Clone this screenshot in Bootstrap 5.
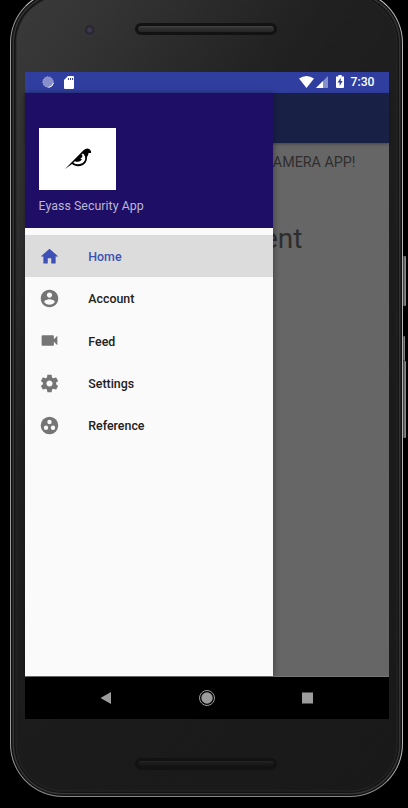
<!DOCTYPE html>
<html lang="en">
<head>
<meta charset="utf-8">
<meta name="viewport" content="width=device-width, initial-scale=1">
<title>Eyass Security App</title>
<link href="https://cdn.jsdelivr.net/npm/bootstrap@5.3.0/dist/css/bootstrap.min.css" rel="stylesheet">
<style>
html,body{height:808px;overflow:hidden}
body{background:#000;font-family:Roboto,"Liberation Sans",sans-serif}
svg{display:block;flex:none}
.phone{width:393px;height:807px;margin:-10px 0 0 10px;border:1.5px solid #aaa;border-color:#ccc #b5b5b5 #8c8c8c #999;border-radius:53px;background:linear-gradient(125deg,#3b3b3b 0,#333 12%,#202020 34%,#1b1b1b 60%,#191919 100%);box-shadow:inset 0 0 0 1.5px #111,inset 0 0 0 3px #353535,inset 0 0 0 4.5px #141414,inset 0 0 0 5.5px #272727}
.forehead{height:80.5px;padding:31.5px 0 0 71px}
.lens{width:14px;height:14px;background:radial-gradient(circle at 55% 50%,#40384c 0 2px,#292634 3px 4px,#323232 5.5px,#383838 7px)}
.speaker{width:142px;height:12px;margin-left:39px;border:3px solid #121212;border-radius:6px;background:linear-gradient(#434343,#303030 35%,#262626)}
.chin .speaker{margin:39px 0 0 123.5px;background:linear-gradient(#252525,#191919 45%,#121212)}
.screen{width:364px;height:647px;margin-left:13.5px;background:#000}
.statusbar{height:21px;background:#303f9f;color:#fff;font-size:12.2px;font-weight:500;padding:0 14px 0 17px}
.statusbar span{margin-left:7px}
.sdcard{margin-left:10px}
.cell{margin:0 8px 0 2px}
.view{height:584px;border-bottom:1px solid #777;background:#666}
.drawer{top:0;left:0;width:248px;height:583px;background:#fafafa;box-shadow:1px 0 6px rgba(0,0,0,.35);z-index:2}
.drawer-head{height:135px;background:#1f0e66;padding:35px 14px 0;margin-bottom:7px;color:#bbb6d1;font-size:12.4px}
.logo{width:77px;height:62px}
.app-title{margin-top:6px;line-height:20px;letter-spacing:.03px}
.menu-row{height:42.4px;padding:1px 14px 0;color:#212121;font-size:12.4px;font-weight:500;gap:28.8px}
.menu-row span{padding-top:2px}
.menu-row svg{fill:#757575}
.menu-row.active{background:#dcdcdc;color:#3f51b5}
.menu-row.active svg{fill:#3f51b5}
.content{color:#2e2e2e}
.appbar{height:50px;background:#192046;box-shadow:0 1px 3px rgba(0,0,0,.35)}
.welcome{margin-top:9px;font-size:14.3px;line-height:20px;padding-right:33px}
.fragment{margin-top:48px;font-size:28px;line-height:38px;padding-right:86px}
.navkeys{height:42px}
.keys{width:4px;margin-top:256px}
.side{width:3px;background:linear-gradient(90deg,#333,#777 60%,#999);border-radius:1px}
.power{height:50px}.vol-top{height:25px;margin-top:30px;width:2px}.vol{height:77px}
</style>
<script src="https://cdn.jsdelivr.net/npm/bootstrap@5.3.0/dist/js/bootstrap.bundle.min.js"></script>
</head>
<body>
<div class="d-flex align-items-start">
<main class="phone flex-shrink-0">
  <div class="forehead d-flex align-items-start">
    <div class="lens rounded-circle"></div><div class="speaker"></div>
  </div>
  <div class="screen">
    <div class="statusbar d-flex align-items-center justify-content-between">
      <div class="d-flex align-items-center">
        <svg width="12" height="12" viewBox="0 0 12 12"><circle cx="6" cy="6" r="5.2" fill="#8790cb" stroke="#a3a9d8" stroke-dasharray="1.5 1"/><path d="M11.400 7A5.500 5.500 0 0 1 6.500 11.400" fill="none" stroke="#fff" stroke-width="1"/></svg>
        <svg width="10" height="13" viewBox="0 0 10 13" class="sdcard"><path d="M0 4 4 0h5q1 0 1 1v11q0 1-1 1H1q-1 0-1-1Z" fill="#fff"/><path d="M4.400 2v2M6.500 2v2M8.600 2v2" stroke="#303f9f"/></svg>
      </div>
      <div class="d-flex align-items-center">
        <svg width="15" height="12" viewBox="0 0 15 12"><path d="M0 2.500Q7.500-2.500 15 2.500L7.500 12Z" fill="#fff"/></svg>
        <svg width="12" height="12" viewBox="0 0 12 12" class="cell"><path d="M0 12 12 0v12Z" fill="#8790cb"/><path d="M0 12 7 5v7Z" fill="#fff"/></svg>
        <svg width="8" height="13" viewBox="0 0 8 13"><path d="M0 1.400h2.300V0h3.400v1.400H8V12q0 1-1 1H1q-1 0-1-1Z" fill="#fff"/><path d="M4.800 2.800 1.600 7.400h2v3.500l3-4.800H4.700Z" fill="#303f9f"/></svg>
        <span>7:30</span>
      </div>
    </div>
    <div class="view position-relative">
      <section class="content">
        <div class="appbar"></div>
        <div class="welcome text-end text-nowrap">CAMERA APP!</div>
        <div class="fragment text-end text-nowrap">Fragment</div>
      </section>
      <aside class="drawer position-absolute">
        <header class="drawer-head">
          <svg class="logo bg-white" viewBox="0 0 77 62"><path d="M26 41 44.500 22.300Q49 18.500 52 23V25L49.500 25Q49.500 27 48 29C48.500 35.500 43 39 37.500 38Q34.500 37.500 33 36Z"/><path d="M44 25.500Q47 28.500 46 32Q44 36.300 38.500 36.300Q35.500 36 34.300 34.500L36 33.200Q39 34.800 42 32.500L43 31H41.200L43.300 29V26.800H42Z" fill="#fff"/></svg>
          <div class="app-title">Eyass Security App</div>
        </header>
        <nav>
          <div class="menu-row active d-flex align-items-center"><svg width="21" height="21" viewBox="0 0 24 24"><path d="M10 20v-6h4v6h5v-8h3L12 3 2 12h3v8z"/></svg><span>Home</span></div>
          <div class="menu-row d-flex align-items-center"><svg width="21" height="21" viewBox="0 0 24 24"><path d="M12 2C6.480 2 2 6.480 2 12s4.480 10 10 10 10-4.480 10-10S17.520 2 12 2zm0 3c1.660 0 3 1.340 3 3s-1.340 3-3 3-3-1.340-3-3 1.340-3 3-3zm0 14.200c-2.500 0-4.710-1.280-6-3.220.03-1.990 4-3.080 6-3.080 1.990 0 5.970 1.090 6 3.080-1.290 1.940-3.500 3.220-6 3.220z"/></svg><span>Account</span></div>
          <div class="menu-row d-flex align-items-center"><svg width="21" height="21" viewBox="0 0 24 24"><path d="M17 10.500V7c0-.55-.45-1-1-1H4c-.55 0-1 .45-1 1v10c0 .55.45 1 1 1h12c.55 0 1-.45 1-1v-3.500l4 4v-11z"/></svg><span>Feed</span></div>
          <div class="menu-row d-flex align-items-center"><svg width="21" height="21" viewBox="0 0 24 24"><path d="M19.430 12.980c.04-.32.07-.64.07-.98s-.03-.66-.07-.98l2.110-1.650c.19-.15.24-.42.12-.64l-2-3.460c-.12-.22-.39-.3-.61-.22l-2.490 1c-.52-.4-1.080-.73-1.690-.98l-.38-2.650C14.460 2.180 14.250 2 14 2h-4c-.25 0-.46.18-.49.42l-.38 2.650c-.61.25-1.170.59-1.690.98l-2.490-1c-.23-.09-.49 0-.61.22l-2 3.460c-.13.22-.07.49.12.64l2.110 1.650c-.04.32-.07.65-.07.98s.03.66.07.98l-2.110 1.650c-.19.15-.24.42-.12.64l2 3.460c.12.22.39.3.61.22l2.490-1c.52.4 1.080.73 1.690.98l.38 2.650c.03.24.24.42.49.42h4c.25 0 .46-.18.49-.42l.38-2.650c.61-.25 1.170-.59 1.690-.98l2.490 1c.23.09.49 0 .61-.22l2-3.460c.12-.22.07-.49-.12-.64l-2.110-1.650zM12 15.500c-1.930 0-3.500-1.570-3.500-3.500s1.570-3.500 3.500-3.500 3.500 1.570 3.500 3.500-1.570 3.500-3.500 3.500z"/></svg><span>Settings</span></div>
          <div class="menu-row d-flex align-items-center"><svg width="21" height="21" viewBox="0 0 24 24"><circle cx="12" cy="12" r="10"/><g fill="#fafafa"><circle cx="12" cy="8" r="2.500"/><circle cx="8" cy="14.500" r="2.500"/><circle cx="16" cy="14.500" r="2.500"/></g></svg><span>Reference</span></div>
        </nav>
      </aside>
    </div>
    <div class="navkeys d-flex align-items-center">
      <svg width="364" height="42" viewBox="0 0 364 42" fill="#9c9c9c"><path d="M75.500 21 86 15v12Z"/><circle cx="182" cy="21" r="5.700"/><circle cx="182" cy="21" r="7.500" fill="none" stroke="#9c9c9c"/><path d="M277 15.500h11v11h-11z"/></svg>
    </div>
  </div>
  <div class="chin d-flex"><div class="speaker"></div></div>
</main>
<div class="keys"><div class="side power"></div><div class="side vol-top"></div><div class="side vol"></div></div>
</div>
</body>
</html>
